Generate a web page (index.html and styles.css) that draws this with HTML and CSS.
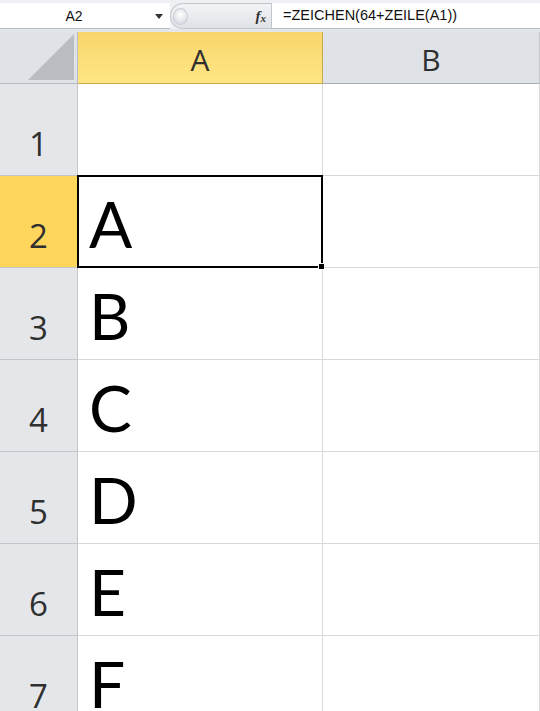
FILE: index.html
```html
<!DOCTYPE html>
<html lang="de">
<head>
    <meta charset="UTF-8">
    <meta name="viewport" content="width=device-width, initial-scale=1.0">
    <title>Tabelle</title>
    <link rel="stylesheet" href="styles.css">
</head>
<body>
    <div class="formula-bar">
        <div class="name-box">
            <span class="name-value">A2</span>
            <span class="name-arrow"></span>
        </div>
        <div class="fx-zone">
            <span class="grip"></span>
            <span class="fx">f<sub>x</sub></span>
        </div>
        <div class="formula-input">=ZEICHEN(64+ZEILE(A1))</div>
    </div>

    <div class="sheet">
        <div class="corner"><span class="corner-tri"></span></div>
        <div class="col-head active">A</div>
        <div class="col-head">B</div>

        <div class="row-head">1</div>
        <div class="cell"></div>
        <div class="cell"></div>

        <div class="row-head active">2</div>
        <div class="cell selected">A<span class="fill-handle"></span></div>
        <div class="cell"></div>

        <div class="row-head">3</div>
        <div class="cell">B</div>
        <div class="cell"></div>

        <div class="row-head">4</div>
        <div class="cell">C</div>
        <div class="cell"></div>

        <div class="row-head">5</div>
        <div class="cell">D</div>
        <div class="cell"></div>

        <div class="row-head">6</div>
        <div class="cell">E</div>
        <div class="cell"></div>

        <div class="row-head">7</div>
        <div class="cell">F</div>
        <div class="cell"></div>
    </div>
</body>
</html>
```

FILE: styles.css
```css
body {
    margin: 0;
    width: 540px;
    height: 711px;
    overflow: hidden;
    background-color: #ffffff;
    font-family: "Open Sans", Arial, sans-serif;
}
.formula-bar {
    display: flex;
    height: 32px;
    box-sizing: border-box;
    padding-top: 3px;
    background-color: #eef0f3;
    border-bottom: 3px solid #e3e6ea;
}
.name-box {
    position: relative;
    width: 170px;
    background-color: #ffffff;
    display: flex;
    align-items: center;
    justify-content: center;
    padding-right: 22px;
    box-sizing: border-box;
    border-bottom: 1px solid #b6bcc6;
}
.name-value {
    font-family: "Liberation Sans", Arial, sans-serif;
    font-size: 14px;
    color: #111;
}
.name-arrow {
    position: absolute;
    right: 7px;
    top: 11px;
    border-left: 4px solid transparent;
    border-right: 4px solid transparent;
    border-top: 5px solid #333;
}
.fx-zone {
    width: 101px;
    display: flex;
    align-items: center;
    justify-content: space-between;
    background: linear-gradient(#f3f4f6, #dfe2e7);
    border: 1px solid #c2c7cf;
    border-right: none;
    border-radius: 14px 0 0 14px;
    box-sizing: border-box;
    padding: 0 5px 0 2px;
}
.grip {
    width: 13px;
    height: 15px;
    border-radius: 50%;
    background: radial-gradient(circle at 50% 40%, #ffffff, #cfd3da);
    border: 1px solid #c9cdd3;
}
.fx {
    font-family: "Liberation Serif", "Times New Roman", serif;
    font-style: italic;
    font-weight: bold;
    font-size: 15px;
    color: #333;
}
.fx sub {
    font-size: 11px;
    vertical-align: -1px;
}
.formula-input {
    flex: 1;
    background-color: #ffffff;
    font-family: "Liberation Sans", Arial, sans-serif;
    font-size: 14.5px;
    color: #111;
    padding: 4px 0 0 11px;
    border-left: 1px solid #c2c7cf;
    border-bottom: 1px solid #b6bcc6;
}
.sheet {
    display: grid;
    grid-template-columns: 78px 245px 1fr;
    grid-template-rows: 52px repeat(7, 92px);
}
.corner {
    background-color: #dfe2e7;
    border-right: 1px solid #b8bcc2;
    border-bottom: 1px solid #b8bcc2;
    box-sizing: border-box;
    position: relative;
}
.corner-tri {
    position: absolute;
    right: 3px;
    bottom: 3px;
    width: 0;
    height: 0;
    border-left: 46px solid transparent;
    border-bottom: 46px solid #b9bcc1;
}
.col-head {
    background-color: #dfe3e8;
    border-right: 1px solid #c3c6cb;
    border-bottom: 1px solid #a9adb3;
    box-sizing: border-box;
    display: flex;
    align-items: center;
    justify-content: center;
    font-size: 30px;
    color: #2f2f2f;
    padding-top: 4px;
}
.col-head.active {
    background: linear-gradient(#f9d56b, #ffe685);
    border-right-color: #c9a94a;
    border-bottom-color: #c9a94a;
}
.row-head {
    background-color: #e4e6ea;
    border-right: 1px solid #c3c6cb;
    border-bottom: 1px solid #c3c6cb;
    box-sizing: border-box;
    display: flex;
    align-items: flex-end;
    justify-content: center;
    font-size: 33px;
    color: #2f2f2f;
    padding-bottom: 15px;
    line-height: 1;
}
.row-head.active {
    background-color: #ffd65c;
    border-right-color: #c9a94a;
}
.cell {
    border-right: 1px solid #d9d9d9;
    border-bottom: 1px solid #d9d9d9;
    box-sizing: border-box;
    display: flex;
    align-items: flex-end;
    font-family: Lato, "Liberation Sans", sans-serif;
    font-size: 64px;
    line-height: 1;
    color: #000;
    padding: 0 0 11px 11px;
}
.cell.selected {
    position: relative;
    border: 2px solid #000;
    margin-top: -1px;
    margin-left: -1px;
    padding-bottom: 10px;
    padding-left: 10px;
}
.fill-handle {
    position: absolute;
    right: -4px;
    bottom: -4px;
    width: 5px;
    height: 5px;
    background-color: #000;
    border: 1px solid #fff;
}
```
